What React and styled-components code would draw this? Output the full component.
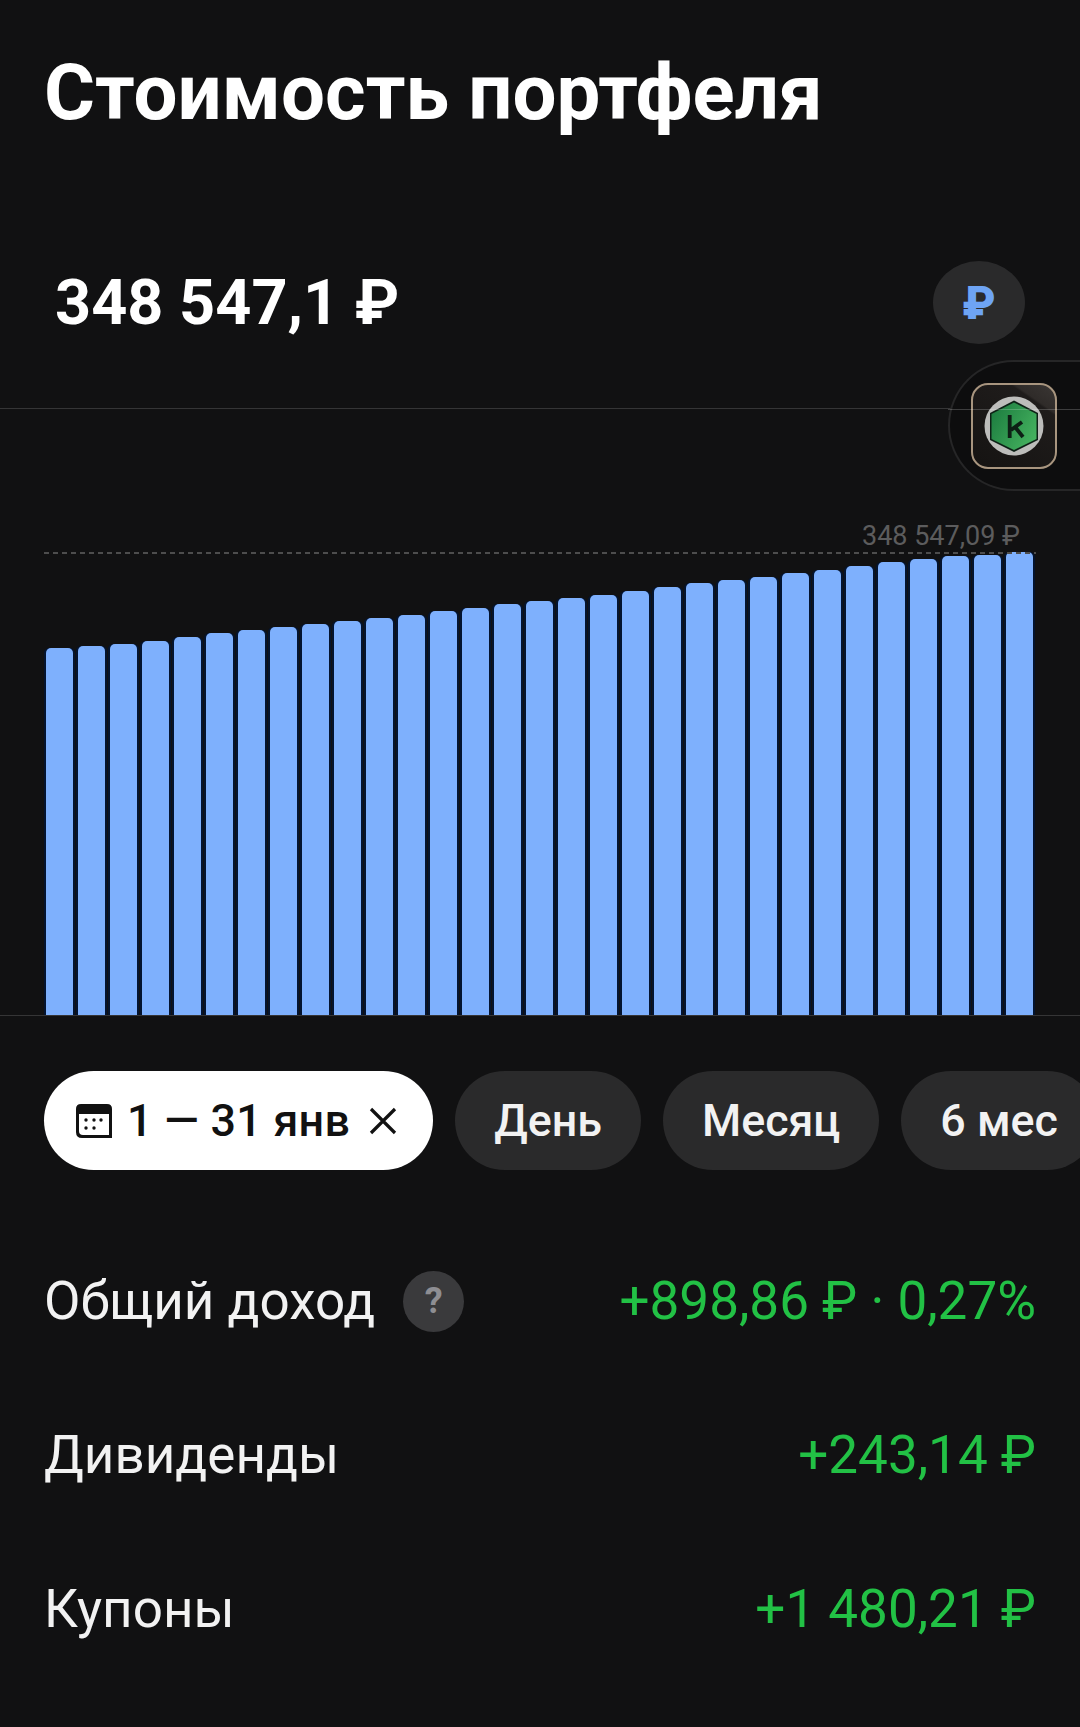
import React from 'react';
import styled, { createGlobalStyle } from 'styled-components';

const Global = createGlobalStyle`
  html, body { margin: 0; padding: 0; background: #111112; }
  * { box-sizing: border-box; }
`;

const Page = styled.div`
  position: relative;
  width: 1080px;
  height: 1727px;
  overflow: hidden;
  background: #111112;
  color: #fff;
  font-family: Roboto, "Noto Sans", sans-serif;
`;

const Title = styled.h1`
  margin: 0;
  padding: 49px 0 0 44px;
  height: 188px;
  font-size: 78px;
  line-height: 88px;
  font-weight: 700;
  color: #fff;
`;

const ValueRow = styled.div`
  display: flex;
  align-items: center;
  justify-content: space-between;
  height: 221px;
  padding: 9px 55px 0 55px;
  border-bottom: 1px solid #353536;
`;

const Value = styled.div`
  font-size: 63px;
  font-weight: 700;
  line-height: 72px;
`;

const CurrencyButton = styled.div`
  width: 92px;
  height: 83px;
  border-radius: 50%;
  background: #2a2a2b;
  display: flex;
  align-items: center;
  justify-content: center;
  color: #6ea4f4;
  font-size: 46px;
  font-weight: 900;
`;

const FloatingDock = styled.div`
  position: absolute;
  left: 948px;
  top: 360px;
  width: 140px;
  height: 131px;
  border: 2px solid #262627;
  border-right: none;
  border-radius: 66px 0 0 66px;
  background: #0d0d0e;
  display: flex;
  align-items: center;
  padding-left: 21px;
`;

const AppIcon = styled.div`
  width: 86px;
  height: 86px;
  border-radius: 17px;
  border: 2px solid #a8957f;
  background: linear-gradient(215deg, #3a3634 0%, #2f2b29 20%, #1f1c1b 22%, #151312 100%);
  display: flex;
  align-items: center;
  justify-content: center;
`;

const Overlay = styled.div`
  position: absolute;
  left: 948px;
  top: 409px;
  width: 132px;
  height: 1px;
  background: rgba(255, 255, 255, 0.2);
`;

const Chart = styled.div`
  position: relative;
  height: 607px;
  padding: 0 0 0 46px;
  display: flex;
  align-items: flex-end;
  gap: 5.03px;
  border-bottom: 1px solid #353536;
`;

const Bar = styled.div`
  width: 27px;
  flex: none;
  height: ${p => p.$h}px;
  background: #7eb0fd;
  border-radius: 5px 5px 0 0;
  box-shadow: 2px 0 0 #04142f, -2px 0 0 #04142f;
`;

const MaxLine = styled.div`
  position: absolute;
  left: 44px;
  right: 44px;
  top: 143px;
  height: 2px;
  background: repeating-linear-gradient(90deg, #4d4d4d 0 5px, transparent 5px 9px);
`;

const MaxLabel = styled.div`
  position: absolute;
  right: 60px;
  top: 111px;
  font-size: 27px;
  line-height: 32px;
  color: #5c5c5d;
`;

const Chips = styled.div`
  display: flex;
  gap: 22px;
  padding: 55px 0 0 44px;
  height: 153px;
  width: 1200px;
`;

const Chip = styled.div`
  height: 99px;
  flex: none;
  border-radius: 50px;
  padding: 0 ${p => p.$active ? 36 : 39}px 0 ${p => p.$active ? 31 : 39}px;
  display: flex;
  align-items: center;
  gap: 14px;
  font-size: 44.8px;
  font-weight: 500;
  background: ${p => p.$active ? '#fff' : '#2a2a2b'};
  color: ${p => p.$active ? '#111' : '#f2f2f2'};
`;

const ChipDate = styled.span`
  letter-spacing: 0.3px;
`;

const Rows = styled.div`
  padding: 0 44px;
  margin-top: 55px;
`;

const Row = styled.div`
  display: flex;
  align-items: center;
  justify-content: space-between;
  height: 154px;
  font-size: 53px;
`;

const Label = styled.div`
  display: flex;
  align-items: center;
  gap: 28px;
  color: #f2f2f2;
`;

const Help = styled.span`
  width: 61px;
  height: 61px;
  border-radius: 50%;
  background: #3a3a3c;
  color: #8e8e93;
  font-size: 36px;
  font-weight: 700;
  display: flex;
  align-items: center;
  justify-content: center;
`;

const Amount = styled.div`
  color: #22c145;
`;

const tops = [648,646,644,641,637,633,630,627,624,621,618,615,611,608,604,601,598,595,591,587,583,580,577,573,570,566,562,559,556,555,552];

const Kaspersky = () => (
  <svg width="60" height="60" viewBox="0 0 60 60">
    <defs>
      <linearGradient id="kg" x1="0" y1="0.2" x2="1" y2="0.8">
        <stop offset="0" stopColor="#1d7d40" />
        <stop offset="1" stopColor="#46b460" />
      </linearGradient>
    </defs>
    <circle cx="30" cy="30" r="29.500" fill="#bdbdbb" />
    <path d="M30 4.500 L54 17 V44 L30 56 L6 44 V17 Z" fill="#0d2116" />
    <path d="M30 6.500 L52.500 18 V43 L30 54 L7.500 43 V18 Z" fill="url(#kg)" />
    <path d="M25.700 19 V42 M27 34 L38 26 M31 31 L39 41" stroke="#0d1f15" strokeWidth="3.800" fill="none" />
  </svg>
);

const CalendarIcon = () => (
  <svg width="38" height="36" viewBox="0 0 38 36">
    <path d="M6 1 H32 Q37 1 37 6 V35 H7 Q1 35 1 29 V6 Q1 1 6 1 Z" fill="#111" />
    <path d="M4 11 H34 V32 H8 Q4 32 4 28 Z" fill="#fff" />
    <g fill="#111">
      <circle cx="11" cy="17" r="1.700" /><circle cx="19" cy="17" r="1.700" /><circle cx="26" cy="17" r="1.700" />
      <circle cx="11" cy="25" r="1.700" /><circle cx="19" cy="25" r="1.700" />
    </g>
  </svg>
);

const CloseIcon = () => (
  <svg width="28" height="28" viewBox="0 0 28 28" style={{ marginLeft: 5 }}>
    <path d="M2 2 L26 26 M26 2 L2 26" stroke="#111" strokeWidth="3.200" />
  </svg>
);

export default function App() {
  return (
    <Page>
      <Global />
      <Title>Стоимость портфеля</Title>
      <ValueRow>
        <Value>348 547,1 ₽</Value>
        <CurrencyButton>₽</CurrencyButton>
      </ValueRow>
      <Chart>
        {tops.map((t, i) => <Bar key={i} $h={1015 - t} />)}
        <MaxLine />
        <MaxLabel>348 547,09 ₽</MaxLabel>
      </Chart>
      <Chips>
        <Chip $active><CalendarIcon /><ChipDate>1 — 31 янв</ChipDate><CloseIcon /></Chip>
        <Chip>День</Chip>
        <Chip>Месяц</Chip>
        <Chip>6 мес</Chip>
      </Chips>
      <Rows>
        <Row><Label>Общий доход<Help>?</Help></Label><Amount>+898,86 ₽ · 0,27%</Amount></Row>
        <Row><Label>Дивиденды</Label><Amount>+243,14 ₽</Amount></Row>
        <Row><Label>Купоны</Label><Amount>+1 480,21 ₽</Amount></Row>
      </Rows>
      <FloatingDock>
        <AppIcon><Kaspersky /></AppIcon>
      </FloatingDock>
      <Overlay />
    </Page>
  );
}
